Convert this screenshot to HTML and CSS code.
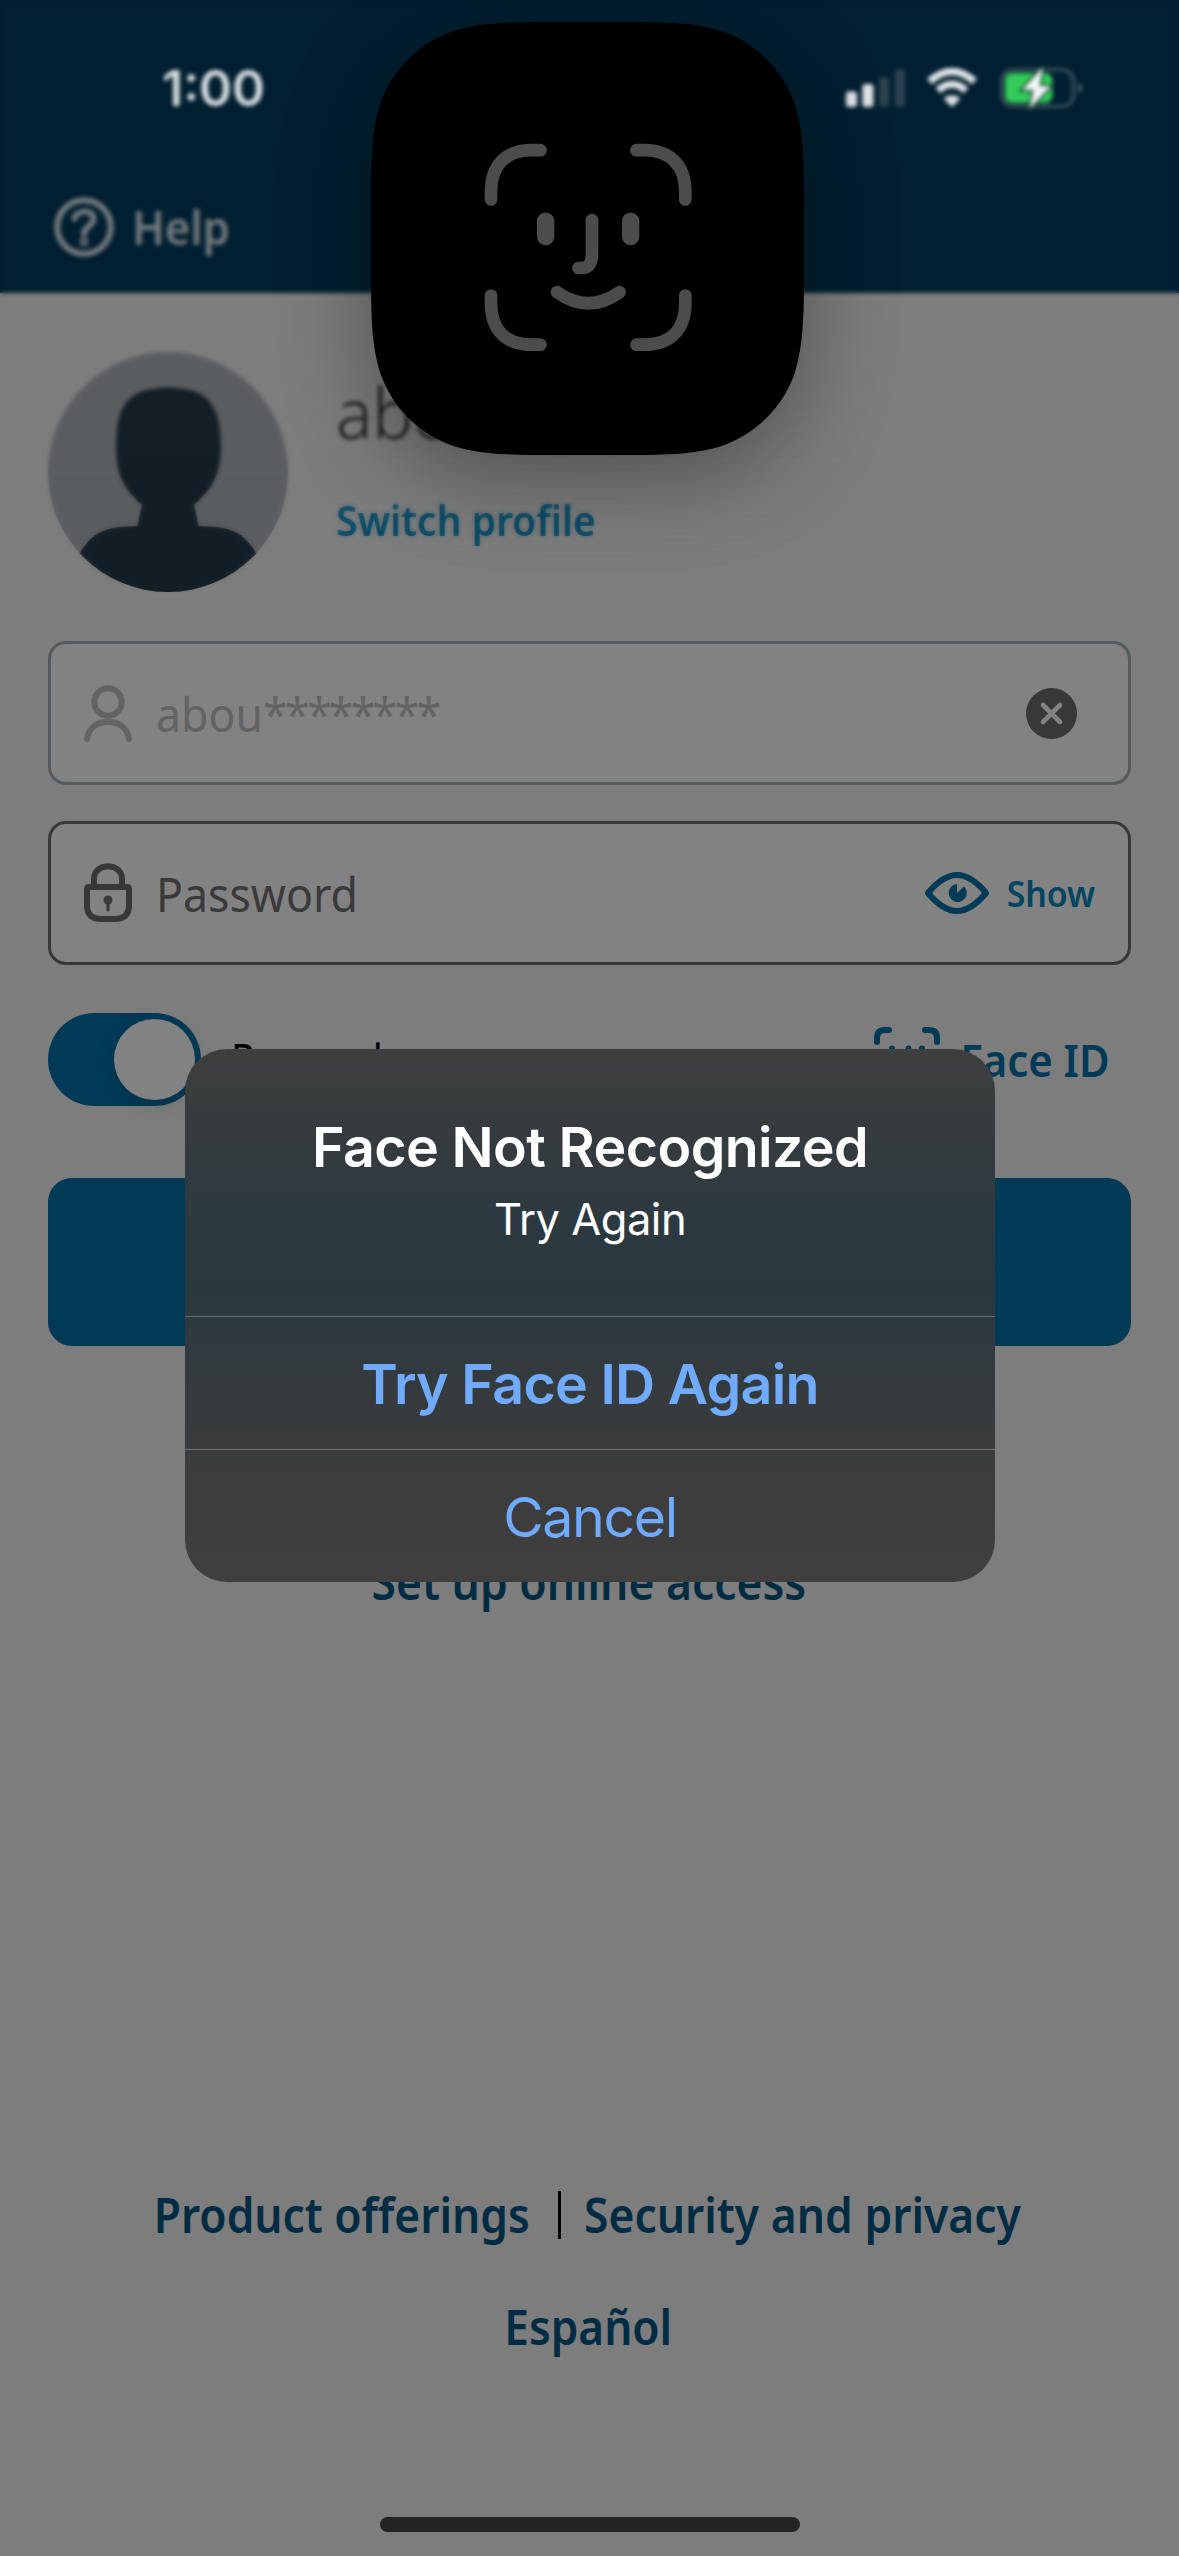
FILE: index.html
```
<!DOCTYPE html>
<html lang="en">
<head>
<meta charset="utf-8">
<title>Sign in</title>
<link rel="stylesheet" href="styles.css">
</head>
<body>
<div class="screen">
  <header class="header">
    <div class="status">
      <span class="time">1:00</span>
      <div class="status-icons">
        <svg width="60" height="40" viewBox="0 0 60 40">
          <g fill="#dfe3e6"><rect x="0" y="23.500" width="11" height="15.5" rx="3"/><rect x="16.4" y="16" width="11" height="23" rx="3"/></g>
          <g fill="#2c4351"><rect x="33" y="9" width="10" height="30" rx="3"/><rect x="49" y="1" width="10" height="38" rx="3"/></g>
        </svg>
        <svg class="wifi" width="50" height="40" viewBox="0 0 50 40" fill="none" stroke="#e3e6e9" stroke-width="7.2">
          <path d="M2.5 13.5 Q25 -6.500 47.500 13.500"/><path d="M11 22.500 Q25 10 39 22.500"/>
          <path d="M25 39 L16.500 30.500 Q25 24 33.500 30.500 Z" fill="#e3e6e9" stroke="none"/>
        </svg>
        <svg class="battery" width="84" height="44" viewBox="0 0 84 44">
          <rect x="1.500" y="3.500" width="72" height="37" rx="12" fill="none" stroke="#415460" stroke-width="3"/>
          <path d="M78 17 Q83 19 83 22 Q83 25 78 27 Z" fill="#415460"/>
          <path d="M13 7 H46 Q52.500 9 52.500 15 V29 Q52.500 35 46 37 H13 Q5 37 5 29 V15 Q5 7 13 7 Z" fill="#33cc58"/>
          <path d="M43 1 L22 24 H33.500 L29.500 43 L51 20 H39.500 Z" fill="#f4f6f8" stroke="#0b3a2a" stroke-width="3.500" paint-order="stroke"/>
        </svg>
      </div>
    </div>
    <div class="help">
      <svg width="60" height="60" viewBox="0 0 60 60" fill="none" stroke="#72787c" stroke-width="6" stroke-linecap="round">
        <circle cx="30" cy="30" r="26.800"/>
        <path d="M20.500 21.500 C22 13 39 11.500 39.500 22 C39.500 29 30 29 30 37"/><circle cx="30" cy="44.800" r="1.400"/>
      </svg>
      <span class="help-label">Help</span>
    </div>
  </header>

  <main class="main">
    <section class="profile">
      <svg width="240" height="240" viewBox="0 0 240 240">
        <clipPath id="disc"><circle cx="120" cy="120" r="120"/></clipPath>
        <g clip-path="url(#disc)">
          <rect width="240" height="240" fill="#5a5e61"/>
          <path fill="#141e26" d="M120 35.500 C157 35.500 173 50 173 94 C173 123 164 137 146 153 L150.500 174 C178 175 193 176 208 201 L240 240 H0 L32 201 C47 176 62 175 89.500 174 L94 153 C76 137 68 123 68 94 C68 50 83 35.500 120 35.500 Z"/>
        </g>
      </svg>
      <div class="profile-text">
        <span class="name">abou</span>
        <a class="switch">Switch profile</a>
      </div>
    </section>

    <div class="field field-muted">
      <svg width="48" height="60" viewBox="0 0 48 60" fill="none" stroke="#636363" stroke-width="6" stroke-linecap="round">
        <circle cx="24" cy="19" r="13.700"/><path d="M3 56 C5 33 43 33 45 56"/>
      </svg>
      <span class="value">abou<span class="mask">********</span></span>
      <svg class="clear" width="51" height="51" viewBox="0 0 51 51">
        <circle cx="25.500" cy="25.500" r="25.500" fill="#383838"/>
        <path d="M17 17 L34 34 M34 17 L17 34" stroke="#828282" stroke-width="4.600" stroke-linecap="round"/>
      </svg>
    </div>

    <div class="field">
      <svg width="48" height="60" viewBox="0 0 48 60" fill="none" stroke="#383838" stroke-width="6">
        <path d="M10 23 V16 C10 -1 38 -1 38 16 V23"/>
        <path d="M5 24 H43 Q45 24 45 26 V42 Q45 56 31 56 H17 Q3 56 3 42 V26 Q3 24 5 24 Z"/>
        <circle cx="24" cy="37" r="4.500" fill="#383838" stroke="none"/><path d="M24 38 V47" stroke-width="3" stroke-linecap="round"/>
      </svg>
      <span class="value">Password</span>
      <div class="show">
        <svg width="66" height="42" viewBox="0 0 66 42">
          <path d="M4 21 C14 9 23 3 33 3 S52 9 62 21 C52 33 43 39 33 39 S14 33 4 21 Z" fill="none" stroke="#003a57" stroke-width="6" stroke-linejoin="round"/>
          <path d="M33 21 L40 14.500 A9 9 0 1 1 33 12 Z" fill="#003a57"/>
        </svg>
        <span class="show-label">Show</span>
      </div>
    </div>

    <div class="options">
      <div class="remember">
        <span class="toggle"><span class="knob"></span></span>
        <span class="remember-label">Remember me</span>
      </div>
      <div class="faceid">
        <svg width="66" height="66" viewBox="0 0 66 66" fill="none" stroke="#003a57" stroke-width="6" stroke-linecap="round">
          <path d="M3 15 V11 Q3 3 11 3 H15 M51 3 H55 Q63 3 63 11 V15 M63 51 V55 Q63 63 55 63 H51 M15 63 H11 Q3 63 3 55 V51 M18 21.500 V26 M48 21.500 V26 M34.500 21.500 V36 M22 45 Q33 53 44 45"/>
        </svg>
        <span class="faceid-label">Face ID</span>
      </div>
    </div>

    <div class="signin"></div>
    <a class="setup">Set up online access</a>
  </main>

  <footer class="footer">
    <div class="links">
      <a class="product">Product offerings</a>
      <span class="bar"></span>
      <a class="security">Security and privacy</a>
    </div>
    <a class="spanish">Español</a>
    <div class="home"></div>
  </footer>

  <div class="haze"></div>

  <svg class="island" width="433" height="433" viewBox="0 0 433 433">
    <path fill="#000" d="M195.700 0 H237.300 C293.700 0 321.800 0 347.200 8.400 L352.200 9.600 C385.300 21.600 411.400 47.700 423.400 80.800 C433 111.200 433 139.300 433 195.700 V237.300 C433 293.700 433 321.800 423.400 352.200 C411.400 385.300 385.300 411.400 352.200 423.400 C321.800 433 293.700 433 237.300 433 H195.700 C139.300 433 111.200 433 80.800 423.400 C47.700 411.400 21.600 385.300 9.600 352.200 C0 321.800 0 293.700 0 237.300 V195.700 C0 139.300 0 111.200 9.600 80.800 C21.600 47.700 47.700 21.600 80.800 9.600 C111.200 0 139.300 0 195.700 0 Z"/>
    <g fill="none" stroke="#4c4c4c" stroke-width="12.700" stroke-linecap="round" stroke-linejoin="round">
      <path d="M120 177.500 V170 C120 143 135 128.200 161 128.200 H169.500"/>
      <path d="M265.500 128.200 H273 C299 128.200 314.300 143 314.300 170 V177.500"/>
      <path d="M120 273.500 V281 C120 308 135 322.700 161 322.700 H169.500"/>
      <path d="M265.500 322.700 H273 C299 322.700 314.300 308 314.300 281 V273.500"/>
      <path d="M221 198 V232 Q221 246 211 246 H207.500"/>
      <path d="M186 270.200 Q217 292.500 248.500 270.200"/>
    </g>
    <g fill="#4c4c4c"><rect x="166" y="190.500" width="17.300" height="32.700" rx="8.600"/><rect x="251" y="190.500" width="17.300" height="32.700" rx="8.600"/></g>
  </svg>

  <div class="alert">
    <div class="alert-head">
      <span class="alert-title">Face Not Recognized</span>
      <span class="alert-text">Try Again</span>
    </div>
    <div class="alert-action primary">Try Face ID Again</div>
    <div class="alert-action cancel">Cancel</div>
  </div>
</div>
</body>
</html>
```
FILE: styles.css
```
* { box-sizing: border-box; }
body { margin: 0; }
svg { display: block; flex: none; }
.screen {
  position: relative;
  width: 1179px;
  height: 2556px;
  overflow: hidden;
  display: flex;
  flex-direction: column;
  background: #7d7d7d;
  font-family: "Noto Sans", sans-serif;
  font-size: 48px;
  line-height: 60px;
  white-space: nowrap;
}
.header { height: 293px; flex: none; background: #001f30; }
.status {
  display: flex;
  justify-content: space-between;
  height: 197px;
  padding: 58px 95px 0 162px;
}
.time { font: 600 50px/60px Inter, sans-serif; color: #d9dee1; }
.status-icons { display: flex; align-items: center; height: 60px; }
.wifi { margin-left: 21px; }
.battery { margin-left: 23px; }
.help { display: flex; align-items: center; gap: 18px; height: 60px; padding-left: 54px; }
.help-label { font-size: 46px; font-weight: 650; color: #72787c; transform: scaleX(.945); transform-origin: left; }
.main { display: flex; flex-direction: column; padding: 59px 48px 0; }
.profile { display: flex; gap: 49px; height: 240px; margin-bottom: 49px; }
.profile-text { display: flex; flex-direction: column; align-items: flex-start; gap: 40px; padding-top: 20px; }
.name { font-size: 70px; line-height: 80px; font-weight: 330; color: #1c1c1c; transform: translateX(-1px) scaleX(.97); transform-origin: left; }
.switch { font-size: 42px; line-height: 56px; font-weight: 650; color: #014765; transform: translateX(-1px) scaleX(.93); transform-origin: left; }
.field {
  display: flex;
  align-items: center;
  height: 144px;
  margin-bottom: 36px;
  padding: 0 33px;
  border: 3px solid #383838;
  border-radius: 18px;
  background: #828282;
  color: #3a3a3a;
}
.field-muted { border-color: #555a5d; color: #636363; }
.value { margin-left: 24px; padding-top: 1px; transform: scaleX(.93); transform-origin: left; }
.mask { letter-spacing: -2.9px; }
.clear { margin-left: auto; margin-right: 18px; }
.show { display: flex; align-items: center; gap: 11px; margin-left: auto; }
.show-label { padding-top: 2px; font-size: 36px; font-weight: 650; color: #014561; transform: scaleX(.94); transform-origin: right; }
.options { display: flex; justify-content: space-between; height: 93px; margin-top: 12px; font-size: 45px; }
.remember, .faceid { display: flex; align-items: center; }
.remember { gap: 30px; color: #000; }
.remember-label { transform: scaleX(.87); transform-origin: left; }
.toggle { width: 153px; height: 93px; padding: 6px; border-radius: 47px; background: #003a57; display: flex; justify-content: flex-end; }
.knob { width: 81px; height: 81px; border-radius: 50%; background: #828282; box-shadow: 0 6px 22px rgba(0, 0, 0, .12); }
.faceid { gap: 9px; padding-right: 21px; color: #003a57; font-weight: 650; }
.faceid svg { margin-top: 1px; }
.faceid-label { transform: scaleX(.93); transform-origin: right; }
.signin { height: 168px; margin-top: 72px; border-radius: 24px; background: #003a57; }
.setup { align-self: center; margin-top: 206px; font-weight: 650; color: #002c43; transform: translateX(-1px) scaleX(.925); }
.footer { display: flex; flex-direction: column; align-items: center; margin-top: auto; height: 371px; font-weight: 650; color: #002c43; }
.links { display: grid; grid-template-columns: 1fr 3px 1fr; align-items: center; width: 1179px; height: 60px; padding-right: 60px; }
.product { justify-self: end; margin-right: 28px; transform: scaleX(.922); transform-origin: right; }
.bar { width: 3px; height: 48px; background: #000; }
.security { justify-self: start; margin-left: 23px; transform: scaleX(.925); transform-origin: left; }
.spanish { margin-top: 52px; transform: translateX(-1px) scaleX(.92); }
.home { width: 420px; height: 15px; margin-top: 160px; border-radius: 8px; background: #242424; }
.haze {
  position: absolute;
  inset: 0 0 auto;
  height: 600px;
  backdrop-filter: blur(2px);
  -webkit-mask-image: linear-gradient(#000 75%, transparent);
  mask-image: linear-gradient(#000 75%, transparent);
}
.island {
  position: absolute;
  left: 371px;
  top: 22px;
  overflow: visible;
  filter: drop-shadow(0 22px 44px rgba(0, 0, 0, .36));
}
.alert {
  position: absolute;
  left: 185px;
  top: 1049px;
  width: 810px;
  height: 533px;
  border-radius: 42px;
  overflow: hidden;
  background: linear-gradient(#3e3e3e 0, #373c3e 12%, #2d3940 32%, #2a3840 46%, #2f3a3f 54%, #373b3d 68%, #3c3c3d 80%, #3f3f3f);
  font-family: Inter, sans-serif;
  color: #fff;
  text-align: center;
}
.alert-head { display: flex; flex-direction: column; align-items: center; height: 267px; padding-top: 68px; }
.alert-title { font-size: 55.500px; font-weight: 600; line-height: 60px; letter-spacing: -.6px; }
.alert-text { font-size: 43.500px; line-height: 60px; margin-top: 12px; letter-spacing: -.5px; }
.alert-action { height: 133px; border-top: 1px solid #6d7276; font-size: 55.500px; line-height: 133px; color: #70abff; letter-spacing: -1.400px; }
.primary { font-weight: 600; border-color: #56707c; letter-spacing: -.7px; }
```
